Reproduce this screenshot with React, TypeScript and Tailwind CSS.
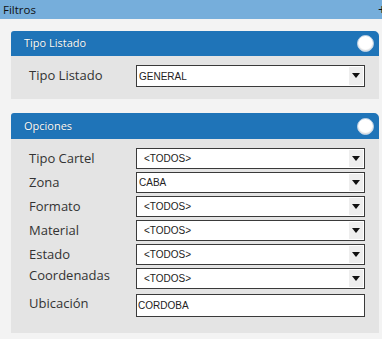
import React from 'react';

const OPCIONES = [
  { label: 'Tipo Cartel', value: '<TODOS>', indent: true },
  { label: 'Zona', value: 'CABA', indent: false },
  { label: 'Formato', value: '<TODOS>', indent: true },
  { label: 'Material', value: '<TODOS>', indent: true },
  { label: 'Estado', value: '<TODOS>', indent: true },
  { label: 'Coordenadas', value: '<TODOS>', indent: true, up: true },
];

function Select({ value, indent, tall }: { value: string; indent?: boolean; tall?: boolean }) {
  return (
    <div className={`flex w-[229px] ${tall ? 'h-[22px]' : 'h-[21px]'} items-stretch border border-[#3a3a3a] bg-white p-px`}>
      <span className={`flex flex-1 items-center font-['Liberation_Sans',sans-serif] text-[10px] text-[#222] ${indent ? 'pl-[6px]' : 'pl-[1px]'}`}>
        {value}
      </span>
      <span className="flex w-[14px] items-center justify-center bg-[#eeeeee]">
        <svg width="8" height="5" viewBox="0 0 8 5" className="-mt-px">
          <path d="M0 0h8L4 5z" fill="#111" />
        </svg>
      </span>
    </div>
  );
}

function PanelHeader({ title, h }: { title: string; h: string }) {
  return (
    <div className={`flex ${h} items-center justify-between rounded-tl-[3px] rounded-tr-[5px] bg-[#1f74b8] pl-[13px] pr-[5px]`}>
      <span className="text-[11px] text-white [text-shadow:0_0_1px_rgba(0,0,0,0.4)]">{title}</span>
      <span className="h-[17px] w-[17px] rounded-full border border-[#b9cfe4] bg-white shadow-[inset_0_-1px_1px_rgba(0,0,0,0.15)]" />
    </div>
  );
}

export default function App() {
  return (
    <div className="h-[339px] w-[382px] overflow-hidden bg-[#f3f3f3] font-['Open_Sans',sans-serif]">
      <div className="flex h-[19px] items-center justify-between bg-[#76aedb] pl-[3px]">
        <span className="text-[11.5px] text-[#111]">Filtros</span>
        <span className="-mr-[4px] text-[14px] leading-none text-[#111]">+</span>
      </div>

      <div className="pl-[11px] pr-[3px] pt-[12px]">
        <div>
          <PanelHeader title="Tipo Listado" h="h-[25px]" />
          <div className="flex items-center bg-[#e4e4e4] pb-[12px] pl-[18px] pt-[9px]">
            <span className="w-[107px] text-[13px] text-[#333]">Tipo Listado</span>
            <Select value="GENERAL" tall />
          </div>
        </div>

        <div className="mt-[14px]">
          <PanelHeader title="Opciones" h="h-[26px]" />
          <div className="flex flex-col gap-[3px] bg-[#e4e4e4] pb-[16px] pl-[18px] pt-[9px]">
            {OPCIONES.map((o) => (
              <div key={o.label} className="flex items-center">
                <span className={`w-[107px] text-[13px] text-[#333] ${o.up ? '-mt-[6px]' : ''}`}>{o.label}</span>
                <Select value={o.value} indent={o.indent} />
              </div>
            ))}
            <div className="mt-[2px] flex items-center">
              <span className="-mt-[4px] w-[107px] text-[13px] text-[#333]">Ubicación</span>
              <div className="flex h-[23px] w-[229px] items-center border border-[#3a3a3a] bg-white pl-[1px] font-['Liberation_Sans',sans-serif] text-[10px] text-[#222]">
                CORDOBA
              </div>
            </div>
          </div>
        </div>
      </div>
    </div>
  );
}
